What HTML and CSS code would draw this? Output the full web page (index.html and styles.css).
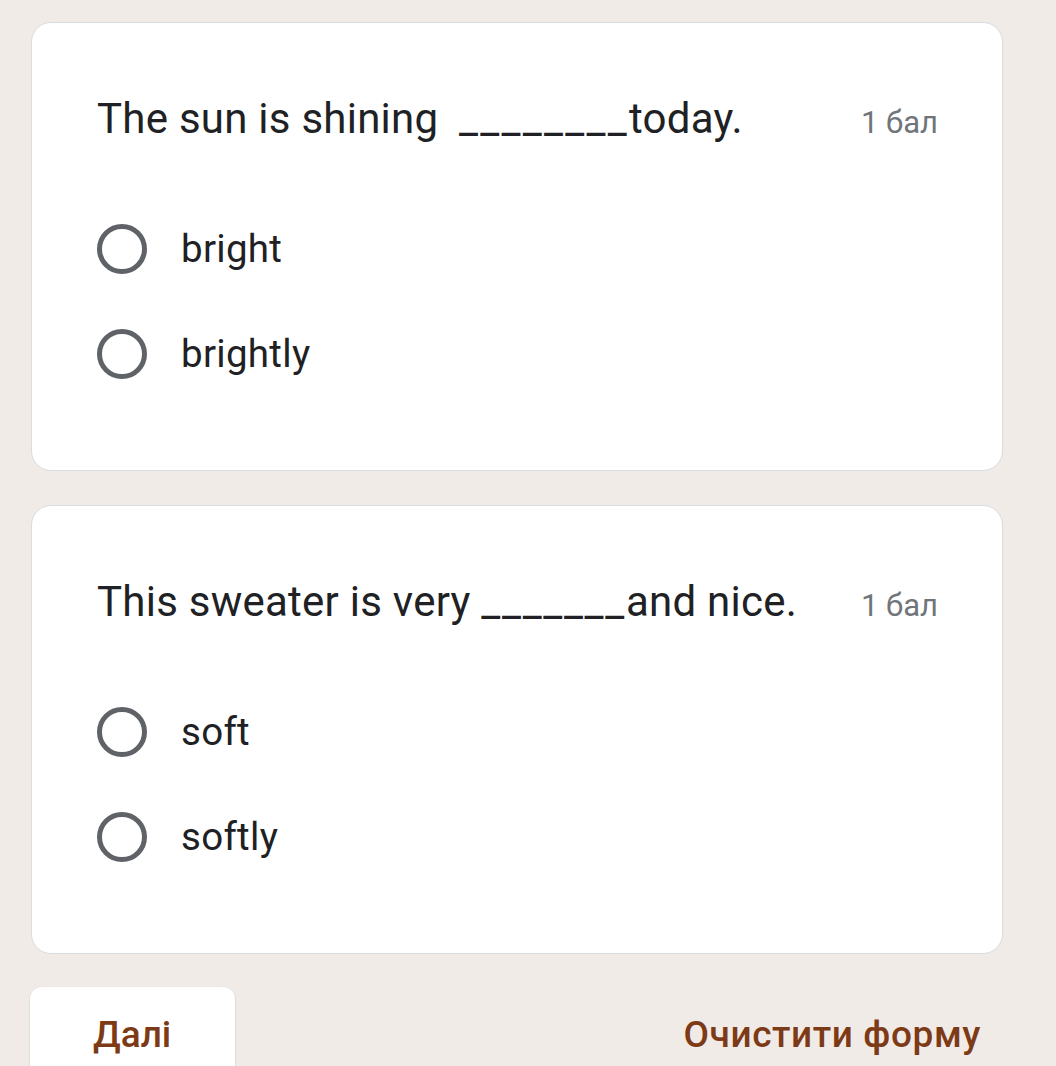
FILE: index.html
```html
<!DOCTYPE html>
<html>
<head>
<meta charset="utf-8">
<link rel="stylesheet" href="styles.css">
</head>
<body>
<div class="page">
  <div class="card">
    <div class="qrow">
      <div class="qtext">The sun is shining <span class="blank b8">________</span>today.</div>
      <div class="points">1 бал</div>
    </div>
    <div class="options">
      <div class="opt"><span class="radio"></span><span class="label">bright</span></div>
      <div class="opt"><span class="radio"></span><span class="label">brightly</span></div>
    </div>
  </div>
  <div class="card">
    <div class="qrow">
      <div class="qtext">This sweater is very <span class="blank b7">_______</span>and nice.</div>
      <div class="points">1 бал</div>
    </div>
    <div class="options">
      <div class="opt"><span class="radio"></span><span class="label">soft</span></div>
      <div class="opt"><span class="radio"></span><span class="label">softly</span></div>
    </div>
  </div>
  <div class="actions">
    <div class="btn-next">Далі</div>
    <div class="btn-clear">Очистити форму</div>
  </div>
</div>
</body>
</html>
```
FILE: styles.css
```css
html, body {
  margin: 0;
  padding: 0;
  background: #f1ebe8;
  overflow: hidden;
}
body {
  font-family: Roboto, "Noto Sans", Arial, sans-serif;
  color: #202124;
}
.page {
  width: 972px;
  margin-left: 31px;
  padding-top: 22px;
  display: flex;
  flex-direction: column;
  gap: 34px;
}
.card {
  background: #fff;
  border: 1px solid #dadce0;
  border-radius: 20px;
  padding: 70px 64px 64px 65px;
}
.qrow {
  display: flex;
  justify-content: space-between;
  align-items: baseline;
  height: 52px;
  line-height: 52px;
}
.qtext {
  font-size: 42px;
  letter-spacing: 0.25px;
}
.blank.b8 {
  margin-left: 10px;
  letter-spacing: 2.3px;
}
.blank.b7 {
  letter-spacing: 1.7px;
}
.points {
  font-size: 31px;
  color: #70757a;
}
.options {
  margin-top: 51px;
  display: flex;
  flex-direction: column;
}
.opt {
  height: 105px;
  display: flex;
  align-items: center;
  gap: 34px;
}
.radio {
  width: 40px;
  height: 40px;
  border: 5px solid #5f6368;
  border-radius: 50%;
  flex: none;
}
.label {
  font-size: 38.5px;
  letter-spacing: 0.3px;
}
.actions {
  display: flex;
  justify-content: space-between;
  align-items: flex-start;
  margin-top: -1px;
}
.btn-next {
  margin-left: -1px;
  width: 205px;
  height: 100px;
  background: #fff;
  border-radius: 12px;
  box-shadow: 0 1px 2px rgba(60,64,67,0.25);
  box-sizing: border-box;
  padding-left: 63px;
  padding-top: 26px;
  font-size: 37px;
  font-weight: 500;
  color: #7d3a17;
}
.btn-clear {
  padding-top: 26px;
  padding-right: 22px;
  font-size: 37px;
  font-weight: 500;
  letter-spacing: 0.6px;
  color: #7d3a17;
}
```
